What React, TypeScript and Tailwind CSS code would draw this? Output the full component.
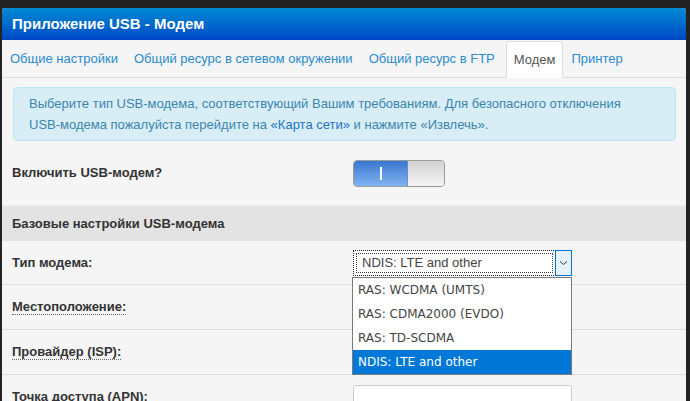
import React, { useState } from 'react';

const TABS = ['Общие настройки', 'Общий ресурс в сетевом окружении', 'Общий ресурс в FTP', 'Модем', 'Принтер'];
const MODEM_TYPES = ['RAS: WCDMA (UMTS)', 'RAS: CDMA2000 (EVDO)', 'RAS: TD-SCDMA', 'NDIS: LTE and other'];

const Row: React.FC<{ label: string; dotted?: boolean; children?: React.ReactNode }> = ({ label, dotted, children }) => (
  <div className="flex items-center h-[45px] border-b border-[#dddddd]">
    <div className="w-[351px] pl-[10px] shrink-0">
      <span className={`font-bold text-[#333333] ${dotted ? 'border-b border-dotted border-[#666]' : ''}`}>{label}</span>
    </div>
    <div className="flex-1">{children}</div>
  </div>
);

const TextInput: React.FC = () => (
  <div className="w-[219px] h-[25px] bg-white border border-[#cccccc] rounded-[3px]" />
);

const App: React.FC = () => {
  const [activeTab] = useState('Модем');
  const [modemType] = useState(MODEM_TYPES[3]);

  return (
    <div className="w-[690px] h-[401px] overflow-hidden bg-[#232323] pt-[8px] pl-[2px] pr-[4px] font-['Liberation_Sans',Arial,sans-serif] text-[13px]">
      <div className="h-full bg-[#f5f5f5] rounded-t-[3px] overflow-hidden">
        <div className="h-[32px] flex items-center pl-[10px] bg-gradient-to-b from-[#008ad2] to-[#0046c6]">
          <h1 className="text-white font-bold text-[15px]">Приложение USB - Модем</h1>
        </div>

        <div className="flex items-end h-[38px] border-b border-[#dddddd]">
          {TABS.map(t =>
            t === activeTab ? (
              <div key={t} className="h-[37px] -mb-px ml-[3px] flex items-center px-[7px] bg-white border border-[#dddddd] border-b-white rounded-t-[4px] text-[#555555]">
                {t}
              </div>
            ) : (
              <div key={t} className="h-[37px] flex items-center px-[8px] text-[#2a8bd0]">
                {t}
              </div>
            )
          )}
        </div>

        <div className="mx-[11px] mr-[10px] mt-[9px] border border-[#bce8f1] bg-[#d9edf7] rounded-[4px] px-[15px] py-[5px] leading-[21px] text-[#3a87ad]">
          Выберите тип USB-модема, соответствующий Вашим требованиям. Для безопасного отключения
          <br />
          USB-модема пожалуйста перейдите на <span className="text-[#1a75c4]">«Карта сети»</span> и нажмите «Извлечь».
        </div>

        <div className="flex items-center h-[64px]">
          <div className="w-[351px] pl-[10px] font-bold text-[#333333]">Включить USB-модем?</div>
          <div className="flex h-[27px] w-[92px] rounded-[4px] border border-[#9a9a9a] overflow-hidden">
            <div className="w-[54px] flex items-center justify-center bg-gradient-to-b from-[#3a76cf] to-[#82b3f1] border-r border-[#6c90c8]">
              <div className="w-[2px] h-[13px] bg-white" />
            </div>
            <div className="flex-1 bg-gradient-to-b from-[#d2d2d2] to-[#f4f4f4]" />
          </div>
        </div>

        <div className="h-[36px] flex items-center pl-[10px] bg-[#e3e3e3] border-t border-[#ececec] font-bold text-[#333333]">
          Базовые настройки USB-модема
        </div>

        <div className="relative">
          <div className="flex items-center h-[44px] border-b border-[#dddddd]">
            <div className="w-[351px] pl-[10px] shrink-0 font-bold text-[#333333]">Тип модема:</div>
            <div className="flex h-[26px] w-[219px] bg-white border border-dotted border-[#222]">
              <div className="flex-1 m-[2px] border border-dotted border-[#444] flex items-center pl-[5px] text-[13px] text-[#444]">
                {modemType}
              </div>
              <div className="w-[17px] -my-px -mr-px bg-[#e5f1fb] border border-[#0078d7] flex items-center justify-center">
                <svg width="9" height="6" viewBox="0 0 9 6">
                  <path d="M1 1.5 L4.5 4.5 L8 1.5" fill="none" stroke="#333" strokeWidth="1" />
                </svg>
              </div>
            </div>
          </div>
          <Row label="Местоположение:" dotted>
            <TextInput />
          </Row>
          <Row label="Провайдер (ISP):" dotted>
            <TextInput />
          </Row>
          <Row label="Точка доступа (APN):">
            <TextInput />
          </Row>

          <div className="absolute left-[350px] top-[36px] w-[220px] bg-white border border-[#7a7a7a] font-['DejaVu_Sans',Tahoma,sans-serif] text-[12px]">
            {MODEM_TYPES.map(m => (
              <div
                key={m}
                className={`h-[24px] flex items-center pl-[5px] ${m === modemType ? 'bg-[#0078d7] text-white' : 'text-[#444]'}`}
              >
                {m}
              </div>
            ))}
          </div>
        </div>
      </div>
    </div>
  );
};

export default App;
